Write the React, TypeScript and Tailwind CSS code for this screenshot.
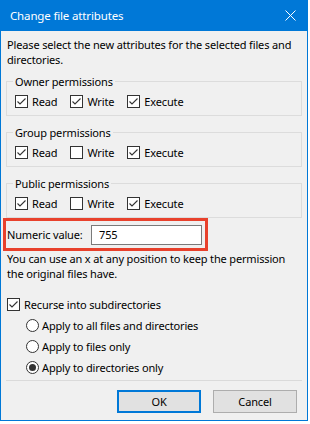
import { useState } from 'react';

type Perm = { read: boolean; write: boolean; execute: boolean };

function CheckBox({ checked, label }: { checked: boolean; label: string }) {
  return (
    <label className="flex h-[16px] items-center gap-[4px]">
      <span className="flex h-[13px] w-[13px] shrink-0 items-center justify-center border border-[#333333] bg-white">
        {checked ? (
          <svg width="11" height="11" viewBox="0 0 11 11">
            <path d="M1.5 5.5 L4 8 L9.5 2.5" stroke="#333333" strokeWidth="1.1" fill="none" />
          </svg>
        ) : null}
      </span>
      <span className="whitespace-nowrap">{label}</span>
    </label>
  );
}

function Radio({ checked, label }: { checked: boolean; label: string }) {
  return (
    <label className="flex h-[16px] items-center gap-[3px]">
      <span className="flex h-[13px] w-[13px] shrink-0 items-center justify-center rounded-full border border-[#333333] bg-white">
        {checked ? <span className="h-[7px] w-[7px] rounded-full bg-[#333333]" /> : null}
      </span>
      <span className="whitespace-nowrap">{label}</span>
    </label>
  );
}

function PermGroup({ title, perm, first }: { title: string; perm: Perm; first?: boolean }) {
  return (
    <fieldset
      className={
        first
          ? 'mt-[7px] border border-[#dcdcdc] pl-[6px] pr-0 pt-[4px] pb-[6px]'
          : 'mt-[9px] border border-[#dcdcdc] pl-[6px] pr-0 pt-[4px] pb-[6px]'
      }
    >
      <legend className="px-[2px] leading-[15px]">{title}</legend>
      <div className="flex items-center gap-[13px] pl-[2px]">
        <CheckBox checked={perm.read} label="Read" />
        <CheckBox checked={perm.write} label="Write" />
        <CheckBox checked={perm.execute} label="Execute" />
      </div>
    </fieldset>
  );
}

export default function App() {
  const [value] = useState('755');

  return (
    <div className="h-[424px] w-[310px] bg-white font-['Segoe_UI','Noto_Sans',sans-serif] text-[11px] leading-[15px] tracking-[-0.15px] text-black">
      <div className="flex h-[421px] w-[308px] flex-col border-x border-b border-[#0078d7] bg-[#f0f0f0]">
        {/* title bar */}
        <div className="flex h-[31px] shrink-0 items-center justify-between bg-[#0078d7] pl-[9px] pr-[11px] text-white">
          <span className="text-[11.5px]">Change file attributes</span>
          <svg width="11" height="11" viewBox="0 0 11 11">
            <path d="M0.5 0.5 L10.5 10.5 M10.5 0.5 L0.5 10.5" stroke="white" strokeWidth="1" />
          </svg>
        </div>

        <div className="flex flex-col px-[5px] pt-[6px]">
          <p className="px-[1px]">Please select the new attributes for the selected files and directories.</p>

          <PermGroup title="Owner permissions" perm={{ read: true, write: true, execute: true }} first />
          <PermGroup title="Group permissions" perm={{ read: true, write: false, execute: true }} />
          <PermGroup title="Public permissions" perm={{ read: true, write: false, execute: true }} />

          <div className="ml-[-3px] flex h-[33px] w-[205px] items-center justify-between border-[3px] border-[#e8412c] pl-[1px] pr-[3px]">
            <span className="whitespace-nowrap">Numeric value:</span>
            <div className="flex h-[20px] w-[111px] items-center border border-[#7a7a7a] bg-white pl-[7px]">{value}</div>
          </div>

          <p className="px-[1px]">
            You can use an x at any position to keep the permission the original files have.
          </p>

          <div className="mt-[15px] flex flex-col gap-[5px] pl-[1px]">
            <CheckBox checked label="Recurse into subdirectories" />
            <div className="flex flex-col gap-[5px] pl-[19px]">
              <Radio checked={false} label="Apply to all files and directories" />
              <Radio checked={false} label="Apply to files only" />
              <Radio checked label="Apply to directories only" />
            </div>
          </div>

          <div className="mt-[5px] border-t border-[#dadada]" />

          <div className="mt-[9px] flex justify-end gap-[12px] pr-[5px]">
            <button className="h-[23px] w-[84px] border-2 border-[#0078d7] bg-[#e1e1e1]">OK</button>
            <button className="h-[23px] w-[84px] border border-[#adadad] bg-[#e1e1e1]">Cancel</button>
          </div>
        </div>
      </div>
    </div>
  );
}
